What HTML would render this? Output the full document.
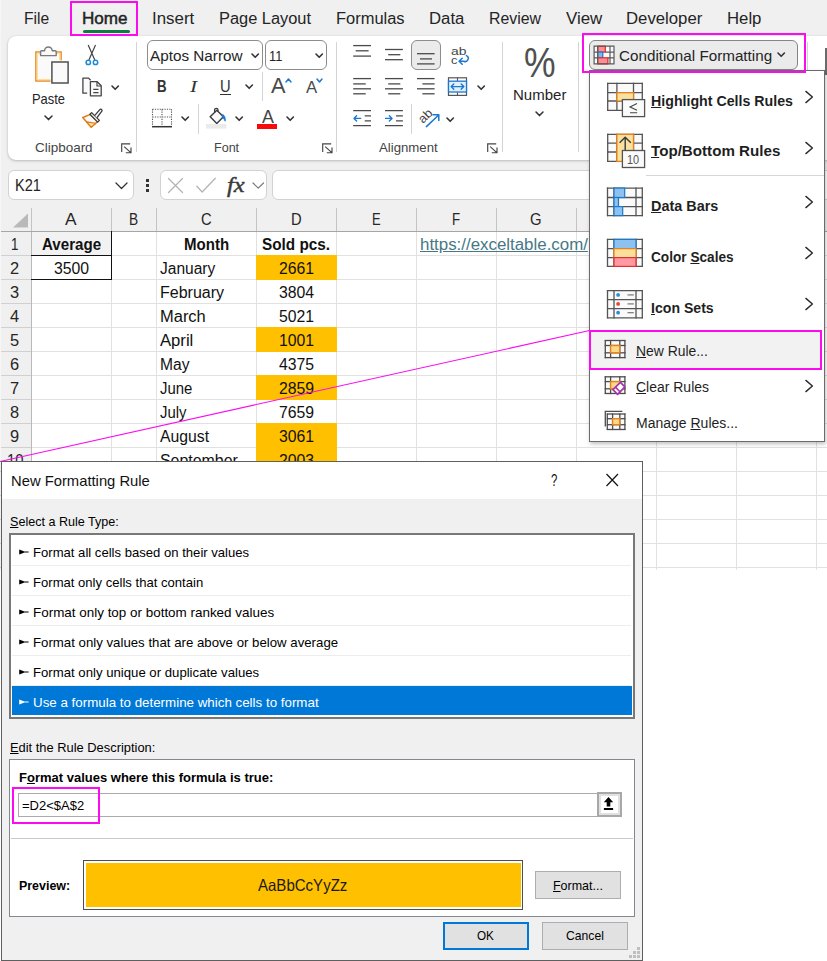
<!DOCTYPE html>
<html lang="en"><head><meta charset="utf-8"><title>New Formatting Rule</title>
<style>
html,body{margin:0;padding:0}
body{width:827px;height:961px;position:relative;overflow:hidden;background:#fff;font-family:"Liberation Sans",sans-serif;}
.b{position:absolute;box-sizing:border-box;display:block}
.t{position:absolute;white-space:pre;line-height:1;transform-origin:0 0;display:block}
u{text-decoration:underline;text-underline-offset:1px}
</style></head>
<body>
<div class="b" style="left:0px;top:0px;width:827px;height:207px;background:#f0f0f0;"></div>
<div class="b" style="left:0px;top:0px;width:1px;height:207px;background:#f6f6f6;"></div>
<span class="t" style="left:23.90px;top:11.00px;font-size:16px;color:#242424;transform:scaleX(0.9744);">File</span>
<span class="t" style="left:82.40px;top:11.00px;font-size:16px;color:#242424;transform:scaleX(1.0674);-webkit-text-stroke:0.45px #242424;">Home</span>
<span class="t" style="left:152.40px;top:11.00px;font-size:16px;color:#242424;transform:scaleX(1.0550);">Insert</span>
<span class="t" style="left:219.40px;top:11.00px;font-size:16px;color:#242424;transform:scaleX(1.0240);">Page Layout</span>
<span class="t" style="left:336.40px;top:11.00px;font-size:16px;color:#242424;transform:scaleX(1.0282);">Formulas</span>
<span class="t" style="left:428.60px;top:11.00px;font-size:16px;color:#242424;transform:scaleX(1.0461);">Data</span>
<span class="t" style="left:489.10px;top:11.00px;font-size:16px;color:#242424;transform:scaleX(0.9889);">Review</span>
<span class="t" style="left:565.70px;top:11.00px;font-size:16px;color:#242424;transform:scaleX(1.0552);">View</span>
<span class="t" style="left:626.20px;top:11.00px;font-size:16px;color:#242424;transform:scaleX(1.0458);">Developer</span>
<span class="t" style="left:727.10px;top:11.00px;font-size:16px;color:#242424;transform:scaleX(1.0462);">Help</span>
<div class="b" style="left:82.5px;top:29.5px;width:47px;height:3px;background:#107c41;border-radius:1.5px;"></div>
<div class="b" style="left:8px;top:36px;width:830px;height:124px;background:#fff;border-radius:8px;box-shadow:0 1px 3px rgba(0,0,0,.22),0 0 1px rgba(0,0,0,.15);"></div>
<div class="b" style="left:136px;top:42px;width:1px;height:110px;background:#d4d4d4;"></div>
<div class="b" style="left:336px;top:42px;width:1px;height:110px;background:#d4d4d4;"></div>
<div class="b" style="left:502px;top:42px;width:1px;height:110px;background:#d4d4d4;"></div>
<div class="b" style="left:578px;top:42px;width:1px;height:110px;background:#d4d4d4;"></div>
<div class="b" style="left:198px;top:103.5px;width:1px;height:30px;background:#d4d4d4;"></div>
<div class="b" style="left:411px;top:103.5px;width:1px;height:30px;background:#d4d4d4;"></div>
<div class="b" style="left:262px;top:72px;width:1px;height:29px;background:#d4d4d4;"></div>
<span class="t" style="left:34.90px;top:141.00px;font-size:13.5px;color:#444;transform:scaleX(0.9969);">Clipboard</span>
<span class="t" style="left:213.90px;top:141.00px;font-size:13.5px;color:#444;transform:scaleX(0.9296);">Font</span>
<span class="t" style="left:379.40px;top:141.00px;font-size:13.5px;color:#444;transform:scaleX(0.9765);">Alignment</span>
<svg class="b" style="left:121.2px;top:142.8px;" width="12" height="12" viewBox="0 0 12 12"><path d="M0.7,9V0.9H9.2 M3.2,3.6L9.8,9.6 M10,4.6V9.7H4.8" fill="none" stroke="#444" stroke-width="1.15"/></svg>
<svg class="b" style="left:321.7px;top:142.8px;" width="12" height="12" viewBox="0 0 12 12"><path d="M0.7,9V0.9H9.2 M3.2,3.6L9.8,9.6 M10,4.6V9.7H4.8" fill="none" stroke="#444" stroke-width="1.15"/></svg>
<svg class="b" style="left:487.2px;top:142.8px;" width="12" height="12" viewBox="0 0 12 12"><path d="M0.7,9V0.9H9.2 M3.2,3.6L9.8,9.6 M10,4.6V9.7H4.8" fill="none" stroke="#444" stroke-width="1.15"/></svg>
<svg class="b" style="left:30px;top:42px;" width="44" height="46" viewBox="30 42 44 46">
<rect x="35.9" y="52" width="25.2" height="29" fill="#fafafa" stroke="#e8821a" stroke-width="1.4"/>
<rect x="37.3" y="53.4" width="22.4" height="26.2" fill="none" stroke="#fbdf9a" stroke-width="1.4"/>
<path d="M40.6,55.6V51.6a0.8,0.8 0 0 1 0.8,-0.8h3.2a3.8,3.8 0 0 1 7.6,0h3.2a0.8,0.8 0 0 1 0.8,0.8V55.6Z" fill="#fafafa" stroke="#7a7a7a" stroke-width="1.4" stroke-linejoin="round"/>
<rect x="50.6" y="60.4" width="19" height="24.4" fill="#fff"/>
<rect x="51.9" y="62" width="16.2" height="21" fill="#fafafa" stroke="#505050" stroke-width="1.5"/>
</svg>
<span class="t" style="left:32.30px;top:91.00px;font-size:15px;color:#242424;transform:scaleX(0.8611);">Paste</span>
<svg class="b" style="left:43.0px;top:113.9px;" width="11" height="7.6" viewBox="0 0 11 7.6"><polyline points="2,2 5.5,5.6 9,2" fill="none" stroke="#333" stroke-width="1.5" stroke-linecap="round" stroke-linejoin="round"/></svg>
<svg class="b" style="left:84px;top:43px;" width="16" height="24" viewBox="84 43 16 24">
<path d="M88.4,45.4L94.6,59.6 M95.3,45.4L89.1,59.6" fill="none" stroke="#444" stroke-width="1.2" stroke-linecap="round"/>
<circle cx="88.3" cy="62.4" r="2.2" fill="none" stroke="#1e8ad6" stroke-width="1.5"/>
<circle cx="95.5" cy="62.4" r="2.2" fill="none" stroke="#1e8ad6" stroke-width="1.5"/>
</svg>
<svg class="b" style="left:80px;top:75px;" width="24" height="24" viewBox="80 75 24 24">
<path d="M87.2,93.2H82.9V78.1H88.6L90.6,80.2" fill="#fafafa" stroke="#444" stroke-width="1.3" stroke-linejoin="round"/>
<path d="M90.4,81.7H97.2L101.2,85.8V95.8H90.4Z" fill="#fafafa" stroke="#444" stroke-width="1.3" stroke-linejoin="round"/>
<path d="M97,81.9V86H101" fill="none" stroke="#444" stroke-width="1.2"/>
<path d="M93.3,89.4H98.5 M93.3,92.6H98.5" stroke="#444" stroke-width="1.1"/>
</svg>
<svg class="b" style="left:109.8px;top:83.55px;" width="10.4" height="7.3" viewBox="0 0 10.4 7.3"><polyline points="2,2 5.2,5.3 8.4,2" fill="none" stroke="#333" stroke-width="1.6" stroke-linecap="round" stroke-linejoin="round"/></svg>
<svg class="b" style="left:80px;top:106px;" width="26" height="24" viewBox="80 106 26 24">
<path d="M90.4,114.4L82.7,117.5L91.2,127.3L97.6,121.6Z" fill="#fafafa" stroke="#e07a14" stroke-width="1.5" stroke-linejoin="round"/>
<path d="M86.6,121.9L95.6,123.3L91.2,127.1Z" fill="#fbdf9a" stroke="#e07a14" stroke-width="1.1" stroke-linejoin="round"/>
<path d="M91.6,112.6L99.4,120.4L97.7,122.1L89.9,114.3Z" fill="#fafafa" stroke="#3c3c3c" stroke-width="1.3" stroke-linejoin="round"/>
<path d="M94.6,115.6L99.8,109.6a1.2,1.2 0 0 1 1.9,0.1a1.2,1.2 0 0 1 0,1.7L96.8,117.8" fill="#fafafa" stroke="#3c3c3c" stroke-width="1.3" stroke-linejoin="round"/>
</svg>
<div class="b" style="left:147px;top:40px;width:116px;height:30px;background:#fff;border:1px solid #8d8d8d;border-radius:6px;"></div>
<span class="t" style="left:149.90px;top:48.00px;font-size:15.5px;color:#242424;transform:scaleX(0.9858);">Aptos Narrow</span>
<svg class="b" style="left:250.2px;top:51.95px;" width="10.4" height="7.3" viewBox="0 0 10.4 7.3"><polyline points="2,2 5.2,5.3 8.4,2" fill="none" stroke="#333" stroke-width="1.6" stroke-linecap="round" stroke-linejoin="round"/></svg>
<div class="b" style="left:265px;top:40px;width:62px;height:30px;background:#fff;border:1px solid #8d8d8d;border-radius:6px;"></div>
<span class="t" style="left:269.00px;top:48.00px;font-size:15.5px;color:#242424;transform:scaleX(0.8251);">11</span>
<svg class="b" style="left:314.3px;top:51.95px;" width="10.4" height="7.3" viewBox="0 0 10.4 7.3"><polyline points="2,2 5.2,5.3 8.4,2" fill="none" stroke="#333" stroke-width="1.6" stroke-linecap="round" stroke-linejoin="round"/></svg>
<span class="t" style="left:157.40px;top:78.00px;font-size:16.5px;color:#333;transform:scaleX(0.8081);font-weight:700;">B</span>
<span class="t" style="left:190.01px;top:78.00px;font-size:17.5px;color:#333;transform:scaleX(1.2180);font-style:italic;font-family:'Liberation Serif',serif;">I</span>
<span class="t" style="left:219.70px;top:78.00px;font-size:16.5px;color:#333;transform:scaleX(0.8923);">U</span>
<div class="b" style="left:220px;top:94px;width:10.6px;height:1.2px;background:#333;"></div>
<svg class="b" style="left:243.8px;top:83.35px;" width="10.4" height="7.3" viewBox="0 0 10.4 7.3"><polyline points="2,2 5.2,5.3 8.4,2" fill="none" stroke="#333" stroke-width="1.6" stroke-linecap="round" stroke-linejoin="round"/></svg>
<span class="t" style="left:271.00px;top:76.00px;font-size:21.5px;color:#4a4a4a;transform:scaleX(1.0135);">A</span>
<svg class="b" style="left:283.8px;top:77.1px;" width="9" height="7" viewBox="0 0 9 7"><polyline points="2,5 4.5,2 7,5" fill="none" stroke="#1b78d0" stroke-width="1.5" stroke-linecap="round" stroke-linejoin="round"/></svg>
<span class="t" style="left:305.60px;top:80.00px;font-size:16px;color:#4a4a4a;transform:scaleX(1.0448);">A</span>
<svg class="b" style="left:314.5px;top:76.9px;" width="9" height="7" viewBox="0 0 9 7"><polyline points="2,2 4.5,5 7,2" fill="none" stroke="#1b78d0" stroke-width="1.5" stroke-linecap="round" stroke-linejoin="round"/></svg>
<svg class="b" style="left:151px;top:108px;" width="22" height="20" viewBox="0 0 22 20">
<path d="M1.5,1.2H20.5 M1.5,1.2V17 M20.5,1.2V17 M11,1.2V17 M1.5,9H20.5" stroke="#555" stroke-width="1.1" stroke-dasharray="1.2,1.2" fill="none"/>
<path d="M1,18.7H21" stroke="#333" stroke-width="1.5"/>
</svg>
<svg class="b" style="left:180.3px;top:115.15px;" width="10.4" height="7.3" viewBox="0 0 10.4 7.3"><polyline points="2,2 5.2,5.3 8.4,2" fill="none" stroke="#333" stroke-width="1.6" stroke-linecap="round" stroke-linejoin="round"/></svg>
<svg class="b" style="left:205px;top:107px;" width="24" height="23" viewBox="0 0 24 23">
<path d="M5.2,9.8L11.8,3.2L18.4,9.8L11.8,16.4Z" fill="#fafafa" stroke="#3c3c3c" stroke-width="1.4" stroke-linejoin="round"/>
<path d="M9.6,5.4V3a1.7,1.7 0 0 1 3.4,0V4.4" fill="none" stroke="#3c3c3c" stroke-width="1.3"/>
<path d="M17.6,7.4C19.8,8.4 20.6,11 20.2,14.2C19.4,12.4 18.6,11.4 17.2,10.6Z" fill="#1b78d0" stroke="#1b78d0" stroke-width="0.8"/>
<rect x="1" y="17" width="20.5" height="4.6" fill="#ebebeb"/>
</svg>
<svg class="b" style="left:234.3px;top:115.15px;" width="10.4" height="7.3" viewBox="0 0 10.4 7.3"><polyline points="2,2 5.2,5.3 8.4,2" fill="none" stroke="#333" stroke-width="1.6" stroke-linecap="round" stroke-linejoin="round"/></svg>
<span class="t" style="left:261.60px;top:108.00px;font-size:18px;color:#444;transform:scaleX(0.9950);">A</span>
<div class="b" style="left:257px;top:124px;width:20px;height:4.6px;background:#f80a0a;"></div>
<svg class="b" style="left:284.8px;top:115.15px;" width="10.4" height="7.3" viewBox="0 0 10.4 7.3"><polyline points="2,2 5.2,5.3 8.4,2" fill="none" stroke="#333" stroke-width="1.6" stroke-linecap="round" stroke-linejoin="round"/></svg>
<svg class="b" style="left:353px;top:43.5px;" width="20" height="14.1" viewBox="0 0 20 14.1"><path d="M0.2,1.6H18" stroke="#4a4a4a" stroke-width="1.3"/><path d="M2.7,6.8H15.6" stroke="#4a4a4a" stroke-width="1.3"/><path d="M0.2,12.1H18" stroke="#4a4a4a" stroke-width="1.3"/></svg>
<svg class="b" style="left:385px;top:47.5px;" width="20" height="13.7" viewBox="0 0 20 13.7"><path d="M0,1.5H17.9" stroke="#4a4a4a" stroke-width="1.3"/><path d="M3.2,6.7H15.3" stroke="#4a4a4a" stroke-width="1.3"/><path d="M0,11.7H17.9" stroke="#4a4a4a" stroke-width="1.3"/></svg>
<div class="b" style="left:411px;top:40px;width:30px;height:30px;background:#ebebeb;border:1px solid #8d8d8d;border-radius:6px;"></div>
<svg class="b" style="left:417px;top:52px;" width="20" height="13.9" viewBox="0 0 20 13.9"><path d="M0,1.7H17.6" stroke="#4a4a4a" stroke-width="1.3"/><path d="M3,6.9H15" stroke="#4a4a4a" stroke-width="1.3"/><path d="M0,11.9H17.6" stroke="#4a4a4a" stroke-width="1.3"/></svg>
<span class="t" style="left:450.60px;top:46.00px;font-size:11.5px;color:#444;transform:scaleX(1.2064);">ab</span>
<span class="t" style="left:450.60px;top:55.00px;font-size:11.5px;color:#444;transform:scaleX(1.1130);">c</span>
<svg class="b" style="left:456px;top:50px;" width="14" height="16" viewBox="0 0 14 16"><path d="M10.4,5.6a3,3 0 0 1 -2.6,5.6H3.6 M6.2,8.2L3.1,11.2L6.2,14.2" fill="none" stroke="#1b78d0" stroke-width="1.5" stroke-linecap="round" stroke-linejoin="round"/></svg>
<svg class="b" style="left:353px;top:77px;" width="20" height="18.8" viewBox="0 0 20 18.8"><path d="M0.2,1.6H18" stroke="#4a4a4a" stroke-width="1.3"/><path d="M0.2,6.9H12.7" stroke="#4a4a4a" stroke-width="1.3"/><path d="M0.2,11.8H18" stroke="#4a4a4a" stroke-width="1.3"/><path d="M0.2,16.8H12.7" stroke="#4a4a4a" stroke-width="1.3"/></svg>
<svg class="b" style="left:385px;top:77px;" width="20" height="18.8" viewBox="0 0 20 18.8"><path d="M0,1.6H17.9" stroke="#4a4a4a" stroke-width="1.3"/><path d="M3.2,6.9H15.3" stroke="#4a4a4a" stroke-width="1.3"/><path d="M0,11.8H17.9" stroke="#4a4a4a" stroke-width="1.3"/><path d="M3.2,16.8H15.3" stroke="#4a4a4a" stroke-width="1.3"/></svg>
<svg class="b" style="left:417px;top:77px;" width="20" height="18.8" viewBox="0 0 20 18.8"><path d="M0,1.6H17.6" stroke="#4a4a4a" stroke-width="1.3"/><path d="M5.4,6.9H17.6" stroke="#4a4a4a" stroke-width="1.3"/><path d="M0,11.8H17.6" stroke="#4a4a4a" stroke-width="1.3"/><path d="M5.4,16.8H17.6" stroke="#4a4a4a" stroke-width="1.3"/></svg>
<svg class="b" style="left:447px;top:76px;" width="22" height="21" viewBox="0 0 22 21">
<rect x="1.5" y="1.8" width="18" height="17.6" fill="#fff" stroke="#555" stroke-width="1.2"/>
<path d="M10.5,1.8V5 M10.5,16.2V19.4" stroke="#555" stroke-width="1.1" fill="none"/>
<rect x="1.5" y="5.2" width="18" height="10.8" fill="#e3f0fb" stroke="#1b78d0" stroke-width="1.3"/>
<path d="M4.3,10.6H16.7 M6.8,8L4.2,10.6L6.8,13.2 M14.2,8L16.8,10.6L14.2,13.2" fill="none" stroke="#1b78d0" stroke-width="1.4" stroke-linecap="round" stroke-linejoin="round"/>
</svg>
<svg class="b" style="left:476.1px;top:83.55px;" width="10.4" height="7.3" viewBox="0 0 10.4 7.3"><polyline points="2,2 5.2,5.3 8.4,2" fill="none" stroke="#333" stroke-width="1.6" stroke-linecap="round" stroke-linejoin="round"/></svg>
<svg class="b" style="left:353px;top:109px;" width="20" height="18" viewBox="0 0 20 18">
<path d="M0.2,1.6H18 M11.7,6.8H18 M11.7,11.9H18 M0.2,16.7H18" stroke="#4a4a4a" stroke-width="1.3"/>
<path d="M1,9.4H7.6 M3.6,6.8L1,9.4L3.6,12" fill="none" stroke="#1b78d0" stroke-width="1.4" stroke-linecap="round" stroke-linejoin="round"/></svg>
<svg class="b" style="left:385px;top:109px;" width="20" height="18" viewBox="0 0 20 18">
<path d="M0,1.6H17.9 M11,6.8H17.9 M11,11.9H17.9 M0,16.7H17.9" stroke="#4a4a4a" stroke-width="1.3"/>
<path d="M0.4,9.4H7 M4.4,6.8L7,9.4L4.4,12" fill="none" stroke="#1b78d0" stroke-width="1.4" stroke-linecap="round" stroke-linejoin="round"/></svg>
<span class="t" style="left:-0.60px;top:-10.00px;font-size:12.5px;color:#444;transform:scaleX(0.9802);left:416px;top:116.5px;transform-origin:0 0;transform:rotate(-45deg) scaleX(1.05);">ab</span>
<svg class="b" style="left:424px;top:112px;" width="18" height="18" viewBox="0 0 18 18"><path d="M2.4,14.6L14.4,3.2 M9,2.8H14.8V8.6" fill="none" stroke="#1b78d0" stroke-width="1.5" stroke-linecap="round" stroke-linejoin="round"/></svg>
<svg class="b" style="left:445.1px;top:115.65px;" width="10.4" height="7.3" viewBox="0 0 10.4 7.3"><polyline points="2,2 5.2,5.3 8.4,2" fill="none" stroke="#333" stroke-width="1.6" stroke-linecap="round" stroke-linejoin="round"/></svg>
<span class="t" style="left:523.90px;top:41.00px;font-size:43px;color:#505050;transform:scaleX(0.8257);">%</span>
<span class="t" style="left:513.20px;top:87.00px;font-size:15px;color:#242424;transform:scaleX(1.0014);">Number</span>
<svg class="b" style="left:533.9px;top:110.0px;" width="11" height="7.6" viewBox="0 0 11 7.6"><polyline points="2,2 5.5,5.6 9,2" fill="none" stroke="#333" stroke-width="1.5" stroke-linecap="round" stroke-linejoin="round"/></svg>
<div class="b" style="left:589px;top:40px;width:209px;height:30px;background:#ebebeb;border:1px solid #858585;border-radius:6px;"></div>
<svg class="b" style="left:593px;top:45px;" width="23" height="21" viewBox="0 0 23 21">
<rect x="1.1" y="1.2" width="19.9" height="17.7" fill="#fafafa"/>
<rect x="4.7" y="1.2" width="7.6" height="5.9" fill="#ff8d97" stroke="#e02626" stroke-width="1.2"/>
<rect x="4.7" y="7.1" width="5.1" height="5.7" fill="#7ab8ee" stroke="#1e78c8" stroke-width="1.2"/>
<rect x="4.7" y="12.8" width="10.2" height="6.1" fill="#ff8d97" stroke="#e02626" stroke-width="1.2"/>
<path d="M1.1,0.6V19.5 M4.7,0.6V19.5 M17,0.6V19.5 M21,0.6V19.5 M0.5,1.2H21.6 M0.5,7.1H4.7 M12.3,7.1H21.6 M0.5,12.8H4.7 M14.9,12.8H21.6 M0.5,18.9H21.6" stroke="#5a5a5a" stroke-width="1.2" fill="none"/>
</svg>
<span class="t" style="left:618.90px;top:48.00px;font-size:15.5px;color:#242424;transform:scaleX(0.9819);">Conditional Formatting</span>
<svg class="b" style="left:776.3px;top:50.95px;" width="10.4" height="7.3" viewBox="0 0 10.4 7.3"><polyline points="2,2 5.2,5.3 8.4,2" fill="none" stroke="#333" stroke-width="1.6" stroke-linecap="round" stroke-linejoin="round"/></svg>
<div class="b" style="left:825px;top:48px;width:2px;height:27px;background:#6a6a6a;"></div>
<div class="b" style="left:807px;top:42px;width:1px;height:28px;background:#d4d4d4;"></div>
<div class="b" style="left:8px;top:170px;width:126px;height:30px;background:#fff;border:1px solid #d2d2d2;border-radius:6px;"></div>
<span class="t" style="left:15.10px;top:178.00px;font-size:16px;color:#242424;transform:scaleX(0.9094);">K21</span>
<svg class="b" style="left:113.5px;top:181.25px;" width="15" height="9.5" viewBox="0 0 15 9.5"><polyline points="2,2 7.5,7.5 13,2" fill="none" stroke="#333" stroke-width="1.3" stroke-linecap="round" stroke-linejoin="round"/></svg>
<div class="b" style="left:146px;top:179px;width:3px;height:3px;background:#333;"></div>
<div class="b" style="left:146px;top:184px;width:3px;height:3px;background:#333;"></div>
<div class="b" style="left:146px;top:189px;width:3px;height:3px;background:#333;"></div>
<div class="b" style="left:160px;top:170px;width:107px;height:30px;background:#fff;border:1px solid #d2d2d2;border-radius:6px;"></div>
<svg class="b" style="left:166px;top:176px;" width="20" height="19" viewBox="0 0 20 19"><path d="M2.5,2.5L16.5,16.5 M16.5,2.5L2.5,16.5" stroke="#b4b4b4" stroke-width="1.3" stroke-linecap="round"/></svg>
<svg class="b" style="left:195px;top:176px;" width="24" height="19" viewBox="0 0 24 19"><path d="M1.8,10.2L7.2,16L20.3,2.2" fill="none" stroke="#b4b4b4" stroke-width="1.3" stroke-linecap="round" stroke-linejoin="round"/></svg>
<span class="t" style="left:227.40px;top:175.00px;font-size:21px;color:#3a3a3a;transform:scaleX(1.1640);-webkit-text-stroke:0.45px #3a3a3a;font-style:italic;font-family:'Liberation Serif',serif;">fx</span>
<svg class="b" style="left:250.75px;top:181.4px;" width="14.5" height="9.2" viewBox="0 0 14.5 9.2"><polyline points="2,2 7.25,7.2 12.5,2" fill="none" stroke="#7a7a7a" stroke-width="1.2" stroke-linecap="round" stroke-linejoin="round"/></svg>
<div class="b" style="left:272px;top:170px;width:600px;height:30px;background:#fff;border:1px solid #d2d2d2;border-radius:6px;"></div>
<div class="b" style="left:0px;top:207px;width:827px;height:25px;background:#f0f0f0;"></div>
<div class="b" style="left:0px;top:232px;width:31px;height:338px;background:#f0f0f0;"></div>
<div class="b" style="left:32px;top:255px;width:795px;height:1px;background:#e1e1e1;"></div>
<div class="b" style="left:32px;top:279px;width:795px;height:1px;background:#e1e1e1;"></div>
<div class="b" style="left:32px;top:303px;width:795px;height:1px;background:#e1e1e1;"></div>
<div class="b" style="left:32px;top:327px;width:795px;height:1px;background:#e1e1e1;"></div>
<div class="b" style="left:32px;top:351px;width:795px;height:1px;background:#e1e1e1;"></div>
<div class="b" style="left:32px;top:375px;width:795px;height:1px;background:#e1e1e1;"></div>
<div class="b" style="left:32px;top:399px;width:795px;height:1px;background:#e1e1e1;"></div>
<div class="b" style="left:32px;top:423px;width:795px;height:1px;background:#e1e1e1;"></div>
<div class="b" style="left:32px;top:447px;width:795px;height:1px;background:#e1e1e1;"></div>
<div class="b" style="left:32px;top:471px;width:795px;height:1px;background:#e1e1e1;"></div>
<div class="b" style="left:32px;top:495px;width:795px;height:1px;background:#e1e1e1;"></div>
<div class="b" style="left:32px;top:519px;width:795px;height:1px;background:#e1e1e1;"></div>
<div class="b" style="left:32px;top:543px;width:795px;height:1px;background:#e1e1e1;"></div>
<div class="b" style="left:32px;top:567px;width:795px;height:1px;background:#e1e1e1;"></div>
<div class="b" style="left:111px;top:232px;width:1px;height:338px;background:#e1e1e1;"></div>
<div class="b" style="left:156px;top:232px;width:1px;height:338px;background:#e1e1e1;"></div>
<div class="b" style="left:256px;top:232px;width:1px;height:338px;background:#e1e1e1;"></div>
<div class="b" style="left:336px;top:232px;width:1px;height:338px;background:#e1e1e1;"></div>
<div class="b" style="left:416px;top:232px;width:1px;height:338px;background:#e1e1e1;"></div>
<div class="b" style="left:496px;top:232px;width:1px;height:338px;background:#e1e1e1;"></div>
<div class="b" style="left:576px;top:232px;width:1px;height:338px;background:#e1e1e1;"></div>
<div class="b" style="left:656px;top:232px;width:1px;height:338px;background:#e1e1e1;"></div>
<div class="b" style="left:736px;top:232px;width:1px;height:338px;background:#e1e1e1;"></div>
<div class="b" style="left:816px;top:232px;width:1px;height:338px;background:#e1e1e1;"></div>
<div class="b" style="left:0px;top:255px;width:31px;height:1px;background:#d0d0d0;"></div>
<div class="b" style="left:0px;top:279px;width:31px;height:1px;background:#d0d0d0;"></div>
<div class="b" style="left:0px;top:303px;width:31px;height:1px;background:#d0d0d0;"></div>
<div class="b" style="left:0px;top:327px;width:31px;height:1px;background:#d0d0d0;"></div>
<div class="b" style="left:0px;top:351px;width:31px;height:1px;background:#d0d0d0;"></div>
<div class="b" style="left:0px;top:375px;width:31px;height:1px;background:#d0d0d0;"></div>
<div class="b" style="left:0px;top:399px;width:31px;height:1px;background:#d0d0d0;"></div>
<div class="b" style="left:0px;top:423px;width:31px;height:1px;background:#d0d0d0;"></div>
<div class="b" style="left:0px;top:447px;width:31px;height:1px;background:#d0d0d0;"></div>
<div class="b" style="left:0px;top:471px;width:31px;height:1px;background:#d0d0d0;"></div>
<div class="b" style="left:0px;top:495px;width:31px;height:1px;background:#d0d0d0;"></div>
<div class="b" style="left:0px;top:519px;width:31px;height:1px;background:#d0d0d0;"></div>
<div class="b" style="left:0px;top:543px;width:31px;height:1px;background:#d0d0d0;"></div>
<div class="b" style="left:0px;top:567px;width:31px;height:1px;background:#d0d0d0;"></div>
<div class="b" style="left:31px;top:232px;width:1px;height:338px;background:#b9b9b9;"></div>
<div class="b" style="left:31px;top:208px;width:1px;height:24px;background:#c4c4c4;"></div>
<div class="b" style="left:111px;top:208px;width:1px;height:24px;background:#c4c4c4;"></div>
<div class="b" style="left:156px;top:208px;width:1px;height:24px;background:#c4c4c4;"></div>
<div class="b" style="left:256px;top:208px;width:1px;height:24px;background:#c4c4c4;"></div>
<div class="b" style="left:336px;top:208px;width:1px;height:24px;background:#c4c4c4;"></div>
<div class="b" style="left:416px;top:208px;width:1px;height:24px;background:#c4c4c4;"></div>
<div class="b" style="left:496px;top:208px;width:1px;height:24px;background:#c4c4c4;"></div>
<div class="b" style="left:576px;top:208px;width:1px;height:24px;background:#c4c4c4;"></div>
<div class="b" style="left:656px;top:208px;width:1px;height:24px;background:#c4c4c4;"></div>
<div class="b" style="left:736px;top:208px;width:1px;height:24px;background:#c4c4c4;"></div>
<div class="b" style="left:816px;top:208px;width:1px;height:24px;background:#c4c4c4;"></div>
<div class="b" style="left:0px;top:231px;width:827px;height:1px;background:#a6a6a6;"></div>
<div class="b" style="left:0px;top:207px;width:1px;height:254px;background:#f6f6f6;"></div>
<svg class="b" style="left:12px;top:213px;" width="17" height="15" viewBox="0 0 17 15"><path d="M16,0.5V14.5H1Z" fill="#b9b9b9"/></svg>
<span class="t" style="left:65.40px;top:212.00px;font-size:16px;color:#262626;transform:scaleX(1.0821);">A</span>
<span class="t" style="left:129.15px;top:212.00px;font-size:16px;color:#262626;transform:scaleX(0.8553);">B</span>
<span class="t" style="left:200.70px;top:212.00px;font-size:16px;color:#262626;transform:scaleX(0.9201);">C</span>
<span class="t" style="left:291.40px;top:212.00px;font-size:16px;color:#262626;transform:scaleX(0.9201);">D</span>
<span class="t" style="left:371.90px;top:212.00px;font-size:16px;color:#262626;transform:scaleX(0.8083);">E</span>
<span class="t" style="left:452.15px;top:212.00px;font-size:16px;color:#262626;transform:scaleX(0.8299);">F</span>
<span class="t" style="left:530.40px;top:212.00px;font-size:16px;color:#262626;transform:scaleX(0.9295);">G</span>
<span class="t" style="left:11.00px;top:236.00px;font-size:16.5px;color:#262626;transform:scaleX(0.8081);">1</span>
<span class="t" style="left:10.40px;top:260.00px;font-size:16.5px;color:#262626;transform:scaleX(0.9937);">2</span>
<span class="t" style="left:10.40px;top:284.00px;font-size:16.5px;color:#262626;transform:scaleX(0.9937);">3</span>
<span class="t" style="left:10.40px;top:308.00px;font-size:16.5px;color:#262626;transform:scaleX(0.9937);">4</span>
<span class="t" style="left:10.40px;top:332.00px;font-size:16.5px;color:#262626;transform:scaleX(0.9937);">5</span>
<span class="t" style="left:10.40px;top:356.00px;font-size:16.5px;color:#262626;transform:scaleX(0.9937);">6</span>
<span class="t" style="left:10.40px;top:380.00px;font-size:16.5px;color:#262626;transform:scaleX(0.9937);">7</span>
<span class="t" style="left:10.40px;top:404.00px;font-size:16.5px;color:#262626;transform:scaleX(0.9937);">8</span>
<span class="t" style="left:10.40px;top:428.00px;font-size:16.5px;color:#262626;transform:scaleX(0.9937);">9</span>
<span class="t" style="left:7.00px;top:452.00px;font-size:16.5px;color:#262626;transform:scaleX(0.8954);">10</span>
<div class="b" style="left:256px;top:255px;width:81px;height:25px;background:#ffc000;"></div>
<div class="b" style="left:256px;top:327px;width:81px;height:25px;background:#ffc000;"></div>
<div class="b" style="left:256px;top:375px;width:81px;height:25px;background:#ffc000;"></div>
<div class="b" style="left:256px;top:423px;width:81px;height:25px;background:#ffc000;"></div>
<div class="b" style="left:256px;top:447px;width:81px;height:25px;background:#ffc000;"></div>
<div class="b" style="left:32px;top:232px;width:79px;height:23px;background:#f2f2f2;"></div>
<div class="b" style="left:111px;top:231px;width:1px;height:49px;background:#111;"></div>
<div class="b" style="left:31px;top:255px;width:81px;height:1px;background:#111;"></div>
<div class="b" style="left:31px;top:279px;width:81px;height:1px;background:#111;"></div>
<span class="t" style="left:41.50px;top:237.00px;font-size:16px;color:#111;transform:scaleX(0.9447);font-weight:700;">Average</span>
<span class="t" style="left:53.80px;top:261.00px;font-size:16px;color:#111;transform:scaleX(0.9860);">3500</span>
<span class="t" style="left:184.40px;top:237.00px;font-size:16px;color:#111;transform:scaleX(0.9396);font-weight:700;">Month</span>
<span class="t" style="left:261.90px;top:237.00px;font-size:16px;color:#111;transform:scaleX(0.9575);font-weight:700;">Sold pcs.</span>
<span class="t" style="left:159.70px;top:261.00px;font-size:16px;color:#111;transform:scaleX(0.9709);">January</span>
<span class="t" style="left:278.70px;top:261.00px;font-size:16px;color:#111;transform:scaleX(0.9860);">2661</span>
<span class="t" style="left:159.70px;top:285.00px;font-size:16px;color:#111;transform:scaleX(1.0016);">February</span>
<span class="t" style="left:278.70px;top:285.00px;font-size:16px;color:#111;transform:scaleX(0.9860);">3804</span>
<span class="t" style="left:159.70px;top:309.00px;font-size:16px;color:#111;transform:scaleX(1.0297);">March</span>
<span class="t" style="left:278.70px;top:309.00px;font-size:16px;color:#111;transform:scaleX(0.9860);">5021</span>
<span class="t" style="left:159.70px;top:333.00px;font-size:16px;color:#111;transform:scaleX(1.0406);">April</span>
<span class="t" style="left:278.70px;top:333.00px;font-size:16px;color:#111;transform:scaleX(0.9860);">1001</span>
<span class="t" style="left:159.70px;top:357.00px;font-size:16px;color:#111;transform:scaleX(0.9755);">May</span>
<span class="t" style="left:278.70px;top:357.00px;font-size:16px;color:#111;transform:scaleX(0.9860);">4375</span>
<span class="t" style="left:159.70px;top:381.00px;font-size:16px;color:#111;transform:scaleX(0.9303);">June</span>
<span class="t" style="left:278.70px;top:381.00px;font-size:16px;color:#111;transform:scaleX(0.9860);">2859</span>
<span class="t" style="left:159.70px;top:405.00px;font-size:16px;color:#111;transform:scaleX(0.9305);">July</span>
<span class="t" style="left:278.70px;top:405.00px;font-size:16px;color:#111;transform:scaleX(0.9860);">7659</span>
<span class="t" style="left:159.70px;top:429.00px;font-size:16px;color:#111;transform:scaleX(0.9852);">August</span>
<span class="t" style="left:278.70px;top:429.00px;font-size:16px;color:#111;transform:scaleX(0.9860);">3061</span>
<span class="t" style="left:159.70px;top:453.00px;font-size:16px;color:#111;transform:scaleX(0.9944);">September</span>
<span class="t" style="left:278.70px;top:453.00px;font-size:16px;color:#111;transform:scaleX(0.9860);">2003</span>
<span class="t" style="left:420.40px;top:237.00px;font-size:16px;color:#467886;transform:scaleX(1.0546);"><u>https://exceltable.com/</u></span>
<svg class="b" style="left:0px;top:325px;" width="600" height="145" viewBox="0 0 600 145"><path d="M589.5,5.5L0,136.5" stroke="#fb0cee" stroke-width="1.05" fill="none"/></svg>
<div class="b" style="left:589px;top:70px;width:236px;height:372px;background:#fff;border:1px solid #6b6b6b;box-shadow:1px 2px 4px rgba(0,0,0,.25);"></div>
<div class="b" style="left:646px;top:175px;width:177.5px;height:1px;background:#d6d6d6;"></div>
<svg class="b" style="left:605px;top:80px;" width="42" height="40" viewBox="0 0 42 40"><rect x="2.7000000000000455" y="3.299999999999997" width="34.59999999999991" height="27.10000000000001" fill="#fafafa"/><path d="M2.7000000000000455,2.699999999999997V31.000000000000007" stroke="#545454" stroke-width="1.3"/><path d="M11.899999999999977,2.699999999999997V31.000000000000007" stroke="#545454" stroke-width="1.3"/><path d="M28.5,2.699999999999997V31.000000000000007" stroke="#545454" stroke-width="1.3"/><path d="M37.299999999999955,2.699999999999997V31.000000000000007" stroke="#545454" stroke-width="1.3"/><path d="M2.1000000000000454,3.299999999999997H37.899999999999956" stroke="#545454" stroke-width="1.3"/><path d="M2.1000000000000454,12.700000000000003H37.899999999999956" stroke="#545454" stroke-width="1.3"/><path d="M2.1000000000000454,21H37.899999999999956" stroke="#545454" stroke-width="1.3"/><path d="M2.1000000000000454,30.400000000000006H37.899999999999956" stroke="#545454" stroke-width="1.3"/><rect x="11.899999999999977" y="12.700000000000003" width="16.600000000000023" height="8.299999999999997" fill="#fbe1a0" stroke="#e8821a" stroke-width="1.3"/><rect x="17.399999999999977" y="19.599999999999994" width="22.2" height="17" fill="#fafafa" stroke="#545454" stroke-width="1.3"/><path d="M32,23.599999999999994L25,27L32,30.299999999999997 M25,32.8H32.200000000000045" fill="none" stroke="#444" stroke-width="1.1"/></svg>
<span class="t" style="left:651.20px;top:93.00px;font-size:15.5px;color:#1f1f1f;transform:scaleX(0.9161);font-weight:700;"><u>H</u>ighlight Cells Rules</span>
<svg class="b" style="left:803px;top:89px;" width="12" height="16" viewBox="0 0 12 16"><polyline points="2.9,2.4 9.4,8 2.9,13.6" fill="none" stroke="#2a2a2a" stroke-width="1.4" stroke-linecap="round" stroke-linejoin="round"/></svg>
<svg class="b" style="left:605px;top:131px;" width="42" height="40" viewBox="0 0 42 40"><rect x="2.7000000000000455" y="3.3000000000000114" width="34.59999999999991" height="27.099999999999994" fill="#fafafa"/><rect x="11.899999999999977" y="3.3000000000000114" width="16.600000000000023" height="27.099999999999994" fill="#fbe1a0"/><path d="M2.7000000000000455,2.7000000000000113V31.000000000000007" stroke="#545454" stroke-width="1.3"/><path d="M11.899999999999977,2.7000000000000113V31.000000000000007" stroke="#545454" stroke-width="1.3"/><path d="M28.5,2.7000000000000113V31.000000000000007" stroke="#545454" stroke-width="1.3"/><path d="M37.299999999999955,2.7000000000000113V31.000000000000007" stroke="#545454" stroke-width="1.3"/><path d="M2.1000000000000454,3.3000000000000114H37.899999999999956" stroke="#545454" stroke-width="1.3"/><path d="M2.1000000000000454,12.199999999999989H37.899999999999956" stroke="#545454" stroke-width="1.3"/><path d="M2.1000000000000454,21H37.899999999999956" stroke="#545454" stroke-width="1.3"/><path d="M2.1000000000000454,30.400000000000006H37.899999999999956" stroke="#545454" stroke-width="1.3"/><rect x="11.899999999999977" y="3.3000000000000114" width="16.600000000000023" height="27.099999999999994" fill="#fbe1a0" stroke="#e8821a" stroke-width="1.3"/><path d="M20.200000000000045,6.300000000000011V21 M14.600000000000023,11.800000000000011L20.200000000000045,6.199999999999989L25.799999999999955,11.800000000000011" fill="none" stroke="#3a3a3a" stroke-width="1.4"/><rect x="17.399999999999977" y="19.5" width="22.2" height="17" fill="#fafafa" stroke="#545454" stroke-width="1.3"/></svg>
<span class="t" style="left:627.40px;top:153.00px;font-size:13px;color:#555;transform:scaleX(0.8385);">10</span>
<span class="t" style="left:651.20px;top:143.00px;font-size:15.5px;color:#1f1f1f;transform:scaleX(0.9774);font-weight:700;"><u>T</u>op/Bottom Rules</span>
<svg class="b" style="left:803px;top:140px;" width="12" height="16" viewBox="0 0 12 16"><polyline points="2.9,2.4 9.4,8 2.9,13.6" fill="none" stroke="#2a2a2a" stroke-width="1.4" stroke-linecap="round" stroke-linejoin="round"/></svg>
<svg class="b" style="left:605px;top:185px;" width="42" height="34" viewBox="0 0 42 34"><rect x="2.5" y="3.0999999999999943" width="34.799999999999955" height="27.5" fill="#fafafa"/><path d="M2.5,2.4999999999999942V31.199999999999996" stroke="#545454" stroke-width="1.3"/><path d="M9,2.4999999999999942V31.199999999999996" stroke="#545454" stroke-width="1.3"/><path d="M31,2.4999999999999942V31.199999999999996" stroke="#545454" stroke-width="1.3"/><path d="M37.299999999999955,2.4999999999999942V31.199999999999996" stroke="#545454" stroke-width="1.3"/><path d="M1.9,3.0999999999999943H37.899999999999956" stroke="#545454" stroke-width="1.3"/><path d="M1.9,12.5H37.899999999999956" stroke="#545454" stroke-width="1.3"/><path d="M1.9,21.599999999999994H37.899999999999956" stroke="#545454" stroke-width="1.3"/><path d="M1.9,30.599999999999994H37.899999999999956" stroke="#545454" stroke-width="1.3"/><rect x="9" y="3.0999999999999943" width="10.700000000000045" height="9.400000000000006" fill="#8dc2f0" stroke="#1e78c8" stroke-width="1.2"/><rect x="9" y="12.5" width="4.5" height="9.099999999999994" fill="#8dc2f0" stroke="#1e78c8" stroke-width="1.2"/><rect x="9" y="21.599999999999994" width="8.700000000000045" height="9.0" fill="#8dc2f0" stroke="#1e78c8" stroke-width="1.2"/></svg>
<span class="t" style="left:651.20px;top:198.00px;font-size:15.5px;color:#1f1f1f;transform:scaleX(0.9298);font-weight:700;"><u>D</u>ata Bars</span>
<svg class="b" style="left:803px;top:194px;" width="12" height="16" viewBox="0 0 12 16"><polyline points="2.9,2.4 9.4,8 2.9,13.6" fill="none" stroke="#2a2a2a" stroke-width="1.4" stroke-linecap="round" stroke-linejoin="round"/></svg>
<svg class="b" style="left:605px;top:236px;" width="42" height="34" viewBox="0 0 42 34"><rect x="2.5" y="3.4000000000000057" width="34.799999999999955" height="26.99999999999997" fill="#fafafa"/><path d="M2.5,2.8000000000000056V30.99999999999998" stroke="#545454" stroke-width="1.3"/><path d="M9,2.8000000000000056V30.99999999999998" stroke="#545454" stroke-width="1.3"/><path d="M31,2.8000000000000056V30.99999999999998" stroke="#545454" stroke-width="1.3"/><path d="M37.299999999999955,2.8000000000000056V30.99999999999998" stroke="#545454" stroke-width="1.3"/><path d="M1.9,3.4000000000000057H37.899999999999956" stroke="#545454" stroke-width="1.3"/><path d="M1.9,12.599999999999994H37.899999999999956" stroke="#545454" stroke-width="1.3"/><path d="M1.9,21.600000000000023H37.899999999999956" stroke="#545454" stroke-width="1.3"/><path d="M1.9,30.399999999999977H37.899999999999956" stroke="#545454" stroke-width="1.3"/><rect x="9" y="3.4000000000000057" width="22" height="9.199999999999989" fill="#8dc2f0" stroke="#1e78c8" stroke-width="1.2"/><rect x="9" y="12.599999999999994" width="22" height="9.000000000000028" fill="#fbdf9c" stroke="#e8821a" stroke-width="1.2"/><rect x="9" y="21.600000000000023" width="22" height="8.799999999999955" fill="#ff9aa2" stroke="#e03030" stroke-width="1.2"/></svg>
<span class="t" style="left:651.20px;top:249.00px;font-size:15.5px;color:#1f1f1f;transform:scaleX(0.8794);font-weight:700;">Color <u>S</u>cales</span>
<svg class="b" style="left:803px;top:245px;" width="12" height="16" viewBox="0 0 12 16"><polyline points="2.9,2.4 9.4,8 2.9,13.6" fill="none" stroke="#2a2a2a" stroke-width="1.4" stroke-linecap="round" stroke-linejoin="round"/></svg>
<svg class="b" style="left:605px;top:287px;" width="42" height="34" viewBox="0 0 42 34"><rect x="2.5" y="3.6000000000000227" width="34.799999999999955" height="27.19999999999999" fill="#fafafa"/><path d="M2.5,3.0000000000000226V31.400000000000013" stroke="#545454" stroke-width="1.3"/><path d="M9,3.0000000000000226V31.400000000000013" stroke="#545454" stroke-width="1.3"/><path d="M31,3.0000000000000226V31.400000000000013" stroke="#545454" stroke-width="1.3"/><path d="M37.299999999999955,3.0000000000000226V31.400000000000013" stroke="#545454" stroke-width="1.3"/><path d="M1.9,3.6000000000000227H37.899999999999956" stroke="#545454" stroke-width="1.3"/><path d="M1.9,12.600000000000023H37.899999999999956" stroke="#545454" stroke-width="1.3"/><path d="M1.9,21.69999999999999H37.899999999999956" stroke="#545454" stroke-width="1.3"/><path d="M1.9,30.80000000000001H37.899999999999956" stroke="#545454" stroke-width="1.3"/><circle cx="13.100000000000023" cy="7.899999999999977" r="1.9" fill="#2b8ae0"/><path d="M22.5,7.899999999999977H28.799999999999955" stroke="#777" stroke-width="1.2"/><circle cx="13.100000000000023" cy="16.899999999999977" r="1.9" fill="#e84040"/><path d="M22.5,16.899999999999977H28.799999999999955" stroke="#777" stroke-width="1.2"/><circle cx="13.100000000000023" cy="25.69999999999999" r="1.9" fill="#2b8ae0"/><path d="M22.5,25.69999999999999H28.799999999999955" stroke="#777" stroke-width="1.2"/></svg>
<span class="t" style="left:651.20px;top:300.00px;font-size:15.5px;color:#1f1f1f;transform:scaleX(0.9100);font-weight:700;"><u>I</u>con Sets</span>
<svg class="b" style="left:803px;top:296.2px;" width="12" height="16" viewBox="0 0 12 16"><polyline points="2.9,2.4 9.4,8 2.9,13.6" fill="none" stroke="#2a2a2a" stroke-width="1.4" stroke-linecap="round" stroke-linejoin="round"/></svg>
<div class="b" style="left:591px;top:332px;width:231px;height:36px;background:#f2f2f2;"></div>
<svg class="b" style="left:603px;top:338px;" width="26" height="24" viewBox="0 0 26 24"><rect x="2.2999999999999545" y="2.5" width="19.600000000000023" height="17.100000000000023" fill="#fafafa"/><path d="M2.30,1.90V20.20" stroke="#4d4d4d" stroke-width="1.3"/><path d="M7.60,1.90V20.20" stroke="#4d4d4d" stroke-width="1.3"/><path d="M16.80,1.90V20.20" stroke="#4d4d4d" stroke-width="1.3"/><path d="M21.90,1.90V20.20" stroke="#4d4d4d" stroke-width="1.3"/><path d="M1.70,2.50H22.50" stroke="#4d4d4d" stroke-width="1.3"/><path d="M1.70,7.50H22.50" stroke="#4d4d4d" stroke-width="1.3"/><path d="M1.70,14.80H22.50" stroke="#4d4d4d" stroke-width="1.3"/><path d="M1.70,19.60H22.50" stroke="#4d4d4d" stroke-width="1.3"/><rect x="7.60" y="7.50" width="9.20" height="7.30" fill="#fbd88a" stroke="#e8821a" stroke-width="1.4"/></svg>
<span class="t" style="left:635.90px;top:343.00px;font-size:15.5px;color:#1f1f1f;transform:scaleX(0.8960);"><u>N</u>ew Rule...</span>
<svg class="b" style="left:603px;top:374px;" width="26" height="24" viewBox="0 0 26 24"><rect x="2.2999999999999545" y="2.8000000000000114" width="19.600000000000023" height="16.69999999999999" fill="#fafafa"/><path d="M2.30,2.20V20.10" stroke="#4d4d4d" stroke-width="1.3"/><path d="M7.60,2.20V20.10" stroke="#4d4d4d" stroke-width="1.3"/><path d="M16.80,2.20V20.10" stroke="#4d4d4d" stroke-width="1.3"/><path d="M21.90,2.20V20.10" stroke="#4d4d4d" stroke-width="1.3"/><path d="M1.70,2.80H22.50" stroke="#4d4d4d" stroke-width="1.3"/><path d="M1.70,7.60H22.50" stroke="#4d4d4d" stroke-width="1.3"/><path d="M1.70,14.80H22.50" stroke="#4d4d4d" stroke-width="1.3"/><path d="M1.70,19.50H22.50" stroke="#4d4d4d" stroke-width="1.3"/><rect x="7.60" y="7.60" width="9.20" height="7.20" fill="#fbd88a" stroke="#e8821a" stroke-width="1.4"/><path d="M9.9,15.6L17.4,8.4L21.9,12.9L14.6,20.4Z" fill="#fff" stroke="#a535a8" stroke-width="1.7" stroke-linejoin="round" transform="translate(0,0)"/><path d="M12.6,13.4L17.2,18" stroke="#a535a8" stroke-width="1.5"/></svg>
<span class="t" style="left:635.90px;top:379.00px;font-size:15.5px;color:#1f1f1f;transform:scaleX(0.9014);"><u>C</u>lear Rules</span>
<svg class="b" style="left:803px;top:377.8px;" width="12" height="16" viewBox="0 0 12 16"><polyline points="2.9,2.4 9.4,8 2.9,13.6" fill="none" stroke="#2a2a2a" stroke-width="1.4" stroke-linecap="round" stroke-linejoin="round"/></svg>
<svg class="b" style="left:603px;top:409px;" width="26" height="24" viewBox="0 0 26 24"><path d="M2.3,17.4V2.3H19.4" fill="none" stroke="#4d4d4d" stroke-width="1.3"/><rect x="4.2999999999999545" y="5" width="17.600000000000023" height="15.5" fill="#fafafa"/><path d="M4.30,4.40V21.10" stroke="#4d4d4d" stroke-width="1.3"/><path d="M9.60,4.40V21.10" stroke="#4d4d4d" stroke-width="1.3"/><path d="M16.80,4.40V21.10" stroke="#4d4d4d" stroke-width="1.3"/><path d="M21.90,4.40V21.10" stroke="#4d4d4d" stroke-width="1.3"/><path d="M3.70,5.00H22.50" stroke="#4d4d4d" stroke-width="1.3"/><path d="M3.70,9.70H22.50" stroke="#4d4d4d" stroke-width="1.3"/><path d="M3.70,15.70H22.50" stroke="#4d4d4d" stroke-width="1.3"/><path d="M3.70,20.50H22.50" stroke="#4d4d4d" stroke-width="1.3"/><rect x="9.60" y="9.70" width="7.20" height="6.00" fill="#fbd88a" stroke="#e8821a" stroke-width="1.4"/></svg>
<span class="t" style="left:635.90px;top:415.00px;font-size:15.5px;color:#1f1f1f;transform:scaleX(0.9030);">Manage <u>R</u>ules...</span>
<div class="b" style="left:70px;top:1px;width:68px;height:35px;border:2px solid #fb0cee;"></div>
<div class="b" style="left:582px;top:33px;width:224px;height:40px;border:2px solid #fb0cee;"></div>
<div class="b" style="left:589px;top:330px;width:233px;height:40px;border:2px solid #fb0cee;"></div>
<div class="b" style="left:1px;top:461px;width:642px;height:500px;background:#f0f0f0;border:1px solid #5f5f5f;"></div>
<div class="b" style="left:2px;top:462px;width:640px;height:37px;background:#fff;"></div>
<span class="t" style="left:11.20px;top:473.00px;font-size:15px;color:#111;transform:scaleX(0.9854);">New Formatting Rule</span>
<span class="t" style="left:551.20px;top:473.00px;font-size:16px;color:#111;transform:scaleX(0.7095);">?</span>
<svg class="b" style="left:604px;top:471px;" width="17" height="18" viewBox="0 0 17 18"><path d="M2.5,3L14,15 M14,3L2.5,15" stroke="#111" stroke-width="1.2"/></svg>
<span class="t" style="left:10.20px;top:515.00px;font-size:13.5px;color:#000;transform:scaleX(0.9312);"><u>S</u>elect a Rule Type:</span>
<div class="b" style="left:9px;top:533px;width:626px;height:186px;background:#fff;border:2px solid #787878;"></div>
<div class="b" style="left:12px;top:565px;width:619px;height:1px;background:#ededed;"></div>
<svg class="b" style="left:18.6px;top:548.4px;" width="11" height="8" viewBox="0 0 11 8"><path d="M0.2,1.4L5.4,3.5H9.6V4.5H5.4L0.2,6.6Z" fill="#000"/></svg>
<span class="t" style="left:32.80px;top:547.00px;font-size:12.8px;color:#000;transform:scaleX(1.0231);">Format all cells based on their values</span>
<div class="b" style="left:12px;top:595px;width:619px;height:1px;background:#ededed;"></div>
<svg class="b" style="left:18.6px;top:578.4px;" width="11" height="8" viewBox="0 0 11 8"><path d="M0.2,1.4L5.4,3.5H9.6V4.5H5.4L0.2,6.6Z" fill="#000"/></svg>
<span class="t" style="left:32.80px;top:577.00px;font-size:12.8px;color:#000;transform:scaleX(1.0224);">Format only cells that contain</span>
<div class="b" style="left:12px;top:625px;width:619px;height:1px;background:#ededed;"></div>
<svg class="b" style="left:18.6px;top:608.4px;" width="11" height="8" viewBox="0 0 11 8"><path d="M0.2,1.4L5.4,3.5H9.6V4.5H5.4L0.2,6.6Z" fill="#000"/></svg>
<span class="t" style="left:32.80px;top:607.00px;font-size:12.8px;color:#000;transform:scaleX(1.0495);">Format only top or bottom ranked values</span>
<div class="b" style="left:12px;top:655px;width:619px;height:1px;background:#ededed;"></div>
<svg class="b" style="left:18.6px;top:638.4px;" width="11" height="8" viewBox="0 0 11 8"><path d="M0.2,1.4L5.4,3.5H9.6V4.5H5.4L0.2,6.6Z" fill="#000"/></svg>
<span class="t" style="left:32.80px;top:637.00px;font-size:12.8px;color:#000;transform:scaleX(1.0335);">Format only values that are above or below average</span>
<div class="b" style="left:12px;top:685px;width:619px;height:1px;background:#ededed;"></div>
<svg class="b" style="left:18.6px;top:668.4px;" width="11" height="8" viewBox="0 0 11 8"><path d="M0.2,1.4L5.4,3.5H9.6V4.5H5.4L0.2,6.6Z" fill="#000"/></svg>
<span class="t" style="left:32.80px;top:667.00px;font-size:12.8px;color:#000;transform:scaleX(1.0289);">Format only unique or duplicate values</span>
<div class="b" style="left:12px;top:686px;width:620px;height:29px;background:#0078d7;"></div>
<svg class="b" style="left:18.6px;top:698.4px;" width="11" height="8" viewBox="0 0 11 8"><path d="M0.2,1.4L5.4,3.5H9.6V4.5H5.4L0.2,6.6Z" fill="#fff"/></svg>
<span class="t" style="left:32.80px;top:697.00px;font-size:12.8px;color:#fff;transform:scaleX(1.0430);">Use a formula to determine which cells to format</span>
<span class="t" style="left:10.20px;top:741.00px;font-size:13.5px;color:#000;transform:scaleX(0.9537);"><u>E</u>dit the Rule Description:</span>
<div class="b" style="left:9px;top:759px;width:626px;height:158px;background:#fff;border:1px solid #828790;"></div>
<span class="t" style="left:19.20px;top:771.00px;font-size:13.5px;color:#000;transform:scaleX(0.9630);font-weight:700;">F<u>o</u>rmat values where this formula is true:</span>
<div class="b" style="left:18px;top:792.5px;width:603px;height:24px;background:#fff;border:1px solid #ababab;"></div>
<span class="t" style="left:22.40px;top:800.00px;font-size:12.5px;color:#000;transform:scaleX(1.0393);">=D2&lt;$A$2</span>
<div class="b" style="left:597px;top:792px;width:25px;height:25px;background:#fff;border:2px solid #a8a8a8;box-shadow:inset 0 0 0 2px #e1e1e1;"></div>
<svg class="b" style="left:602px;top:796px;" width="14" height="16" viewBox="0 0 14 16"><path d="M6.5,1L11.2,6.3H8.3V10.6H4.7V6.3H1.8Z" fill="#000"/><rect x="1.9" y="12" width="9.2" height="2" fill="#000"/></svg>
<div class="b" style="left:11px;top:838px;width:622px;height:1px;background:#c9c9c9;"></div>
<div class="b" style="left:12px;top:787px;width:88px;height:36.5px;border:2px solid #fb0cee;"></div>
<span class="t" style="left:19.20px;top:879.00px;font-size:13.5px;color:#000;transform:scaleX(0.9199);font-weight:700;">Preview:</span>
<div class="b" style="left:83px;top:860px;width:440px;height:50px;background:#fff;border:1px solid #4d4d4d;"></div>
<div class="b" style="left:86px;top:863px;width:434.5px;height:43.5px;background:#ffc000;"></div>
<span class="t" style="left:257.70px;top:877.00px;font-size:16.5px;color:#1a1a1a;transform:scaleX(0.9104);">AaBbCcYyZz</span>
<div class="b" style="left:535px;top:871px;width:86px;height:27.5px;background:#e1e1e1;border:1px solid #adadad;"></div>
<span class="t" style="left:552.60px;top:879.00px;font-size:13.5px;color:#000;transform:scaleX(0.9241);"><u>F</u>ormat...</span>
<div class="b" style="left:443px;top:922px;width:86px;height:27.5px;background:#e1e1e1;border:2px solid #0078d7;"></div>
<span class="t" style="left:476.90px;top:929.00px;font-size:13.5px;color:#000;transform:scaleX(0.8663);">OK</span>
<div class="b" style="left:542px;top:922px;width:86px;height:27.5px;background:#e1e1e1;border:1px solid #adadad;"></div>
<span class="t" style="left:565.90px;top:929.00px;font-size:13.5px;color:#000;transform:scaleX(0.9013);">Cancel</span>
<svg class="b" style="left:629px;top:947px;" width="12" height="12" viewBox="0 0 12 12"><rect x="8" y="0" width="3" height="3" fill="#bfbfbf"/><rect x="4" y="4" width="3" height="3" fill="#bfbfbf"/><rect x="8" y="4" width="3" height="3" fill="#bfbfbf"/><rect x="0" y="8" width="3" height="3" fill="#bfbfbf"/><rect x="4" y="8" width="3" height="3" fill="#bfbfbf"/><rect x="8" y="8" width="3" height="3" fill="#bfbfbf"/></svg>
</body></html>
